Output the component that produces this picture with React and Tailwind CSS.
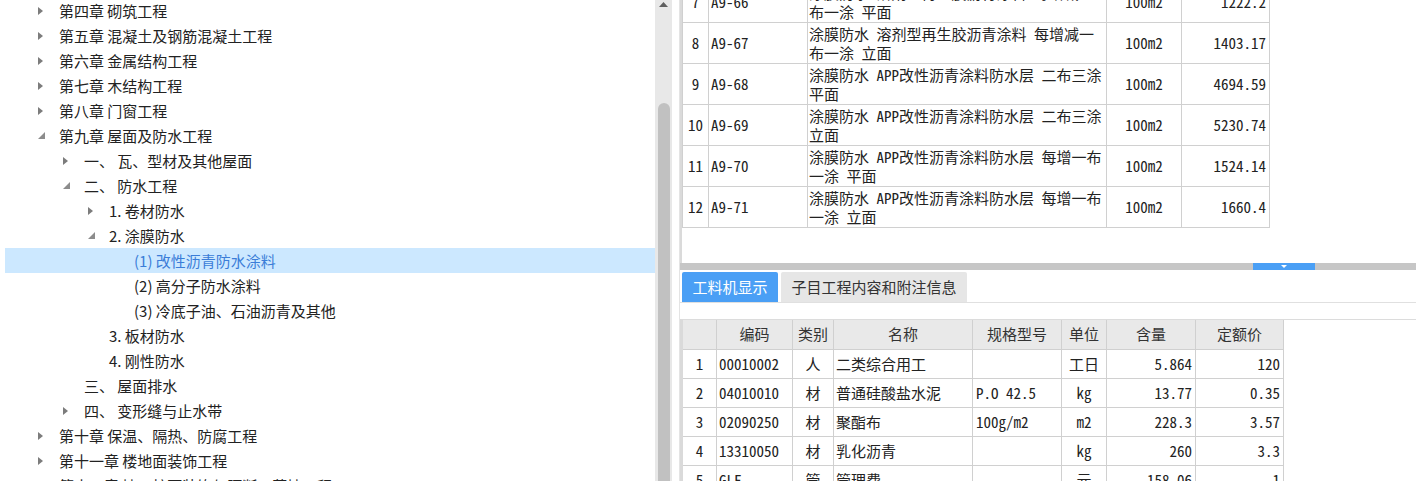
import React from "react";

const treeRows = [
  { level: 0, arrow: "closed", text: "第四章 砌筑工程" },
  { level: 0, arrow: "closed", text: "第五章 混凝土及钢筋混凝土工程" },
  { level: 0, arrow: "closed", text: "第六章 金属结构工程" },
  { level: 0, arrow: "closed", text: "第七章 木结构工程" },
  { level: 0, arrow: "closed", text: "第八章 门窗工程" },
  { level: 0, arrow: "open", text: "第九章 屋面及防水工程" },
  { level: 1, arrow: "closed", text: "一、 瓦、型材及其他屋面" },
  { level: 1, arrow: "open", text: "二、 防水工程" },
  { level: 2, arrow: "closed", text: "1. 卷材防水" },
  { level: 2, arrow: "open", text: "2. 涂膜防水" },
  { level: 3, arrow: null, text: "(1) 改性沥青防水涂料", selected: true },
  { level: 3, arrow: null, text: "(2) 高分子防水涂料" },
  { level: 3, arrow: null, text: "(3) 冷底子油、石油沥青及其他" },
  { level: 2, arrow: null, text: "3. 板材防水" },
  { level: 2, arrow: null, text: "4. 刚性防水" },
  { level: 1, arrow: null, text: "三、 屋面排水" },
  { level: 1, arrow: "closed", text: "四、 变形缝与止水带" },
  { level: 0, arrow: "closed", text: "第十章 保温、隔热、防腐工程" },
  { level: 0, arrow: "closed", text: "第十一章 楼地面装饰工程" },
  { level: 0, arrow: "closed", text: "第十二章 墙、柱面装饰与隔断、幕墙工程" },
];

const indent = ["pl-[33px]", "pl-[58px]", "pl-[83px]", "pl-[108px]"];

const quotaRows = [
  { no: 7, code: "A9-66", l1: "涂膜防水 溶剂型再生胶沥青涂料 每增减一", l2: "布一涂 平面", unit: "100m2", price: "1222.2" },
  { no: 8, code: "A9-67", l1: "涂膜防水 溶剂型再生胶沥青涂料 每增减一", l2: "布一涂 立面", unit: "100m2", price: "1403.17" },
  { no: 9, code: "A9-68", l1: "涂膜防水 APP改性沥青涂料防水层 二布三涂", l2: "平面", unit: "100m2", price: "4694.59" },
  { no: 10, code: "A9-69", l1: "涂膜防水 APP改性沥青涂料防水层 二布三涂", l2: "立面", unit: "100m2", price: "5230.74" },
  { no: 11, code: "A9-70", l1: "涂膜防水 APP改性沥青涂料防水层 每增一布", l2: "一涂 平面", unit: "100m2", price: "1524.14" },
  { no: 12, code: "A9-71", l1: "涂膜防水 APP改性沥青涂料防水层 每增一布", l2: "一涂 立面", unit: "100m2", price: "1660.4" },
];

const materials = [
  { no: 1, code: "00010002", kind: "人", name: "二类综合用工", spec: "", unit: "工日", qty: "5.864", price: "120" },
  { no: 2, code: "04010010", kind: "材", name: "普通硅酸盐水泥", spec: "P.O 42.5", unit: "kg", qty: "13.77", price: "0.35" },
  { no: 3, code: "02090250", kind: "材", name: "聚酯布", spec: "100g/m2", unit: "m2", qty: "228.3", price: "3.57" },
  { no: 4, code: "13310050", kind: "材", name: "乳化沥青", spec: "", unit: "kg", qty: "260", price: "3.3" },
  { no: 5, code: "GLF", kind: "管", name: "管理费", spec: "", unit: "元", qty: "158.06", price: "1" },
];

const cell = "border-r border-b border-[#d0d0d0] flex items-center";
const mono = "font-['Noto_Sans_Mono_CJK_SC','Noto_Sans_CJK_SC',sans-serif]";

function Arrow({ kind }) {
  if (kind === "closed") {
    return (
      <svg width="6" height="8" viewBox="0 0 6 8">
        <polygon points="0,0 5,4 0,8" fill="#7c7c7c" />
      </svg>
    );
  }
  if (kind === "open") {
    return (
      <svg width="7" height="7" viewBox="0 0 7 7">
        <polygon points="7,0 7,7 0,7" fill="#8c8c8c" />
      </svg>
    );
  }
  return null;
}

export default function App() {
  return (
    <div className="w-[1416px] h-[481px] overflow-hidden bg-white flex text-[15px] text-[#222] font-['Noto_Sans_CJK_SC',sans-serif]">
      {/* tree */}
      <div className="w-[655px] h-full overflow-hidden">
        <div className="-mt-[2px]">
          {treeRows.map((r, i) => (
            <div
              key={i}
              className={`ml-[5px] h-[25px] flex items-center ${indent[r.level]} ${
                r.selected ? "bg-[#cce8ff] text-[#3b7dd8]" : ""
              }`}
            >
              <div className="w-[21px] flex items-center">
                <Arrow kind={r.arrow} />
              </div>
              <span className="whitespace-pre leading-[25px]">{r.text}</span>
            </div>
          ))}
        </div>
      </div>

      {/* scrollbar */}
      <div className="w-[17px] h-full bg-[#e8e8e8] flex flex-col items-center">
        <svg width="9" height="5" viewBox="0 0 9 5" className="mt-[2px]">
          <polygon points="0,5 4.5,0 9,5" fill="#5f5f5f" />
        </svg>
        <div className="mt-[96px] w-[12px] flex-1 bg-[#c1c1c1] rounded-t-[6px]" />
      </div>
      <div className="w-[8px] h-full border-r border-[#e4e4e4]" />

      {/* right panel */}
      <div className="flex-1 h-full flex flex-col">
        <div className="h-[263px] overflow-hidden border-l-2 border-[#dadada]">
          <div className={`-mt-[18px] w-[587px] grid grid-cols-[26px_99px_299px_75px_88px] border-l border-[#d0d0d0] ${mono}`}>
            {quotaRows.map((r) => (
              <React.Fragment key={r.no}>
                <div className={`${cell} h-[41px] justify-center`}>{r.no}</div>
                <div className={`${cell} h-[41px] pl-[2px]`}>{r.code}</div>
                <div className={`${cell} h-[41px] pl-[1px] flex-col !items-start justify-center leading-[19px] whitespace-pre`}>
                  <span>{r.l1}</span>
                  <span>{r.l2}</span>
                </div>
                <div className={`${cell} h-[41px] justify-center`}>{r.unit}</div>
                <div className={`${cell} h-[41px] justify-end pr-[3px]`}>{r.price}</div>
              </React.Fragment>
            ))}
          </div>
        </div>

        {/* splitter */}
        <div className="h-[7px] bg-[#c6c6c6] flex">
          <div className="ml-[573px] w-[62px] bg-[#4a9ff5] flex justify-center">
            <svg width="6" height="4" viewBox="0 0 6 4" className="mt-[2px]">
              <polygon points="0,0 6,0 3,3" fill="#ffffff" />
            </svg>
          </div>
        </div>

        {/* tabs */}
        <div className="pt-[2px] flex gap-[3px] pl-[2px] border-b border-[#e0e0e0]">
          <div className="h-[30px] w-[96px] bg-[#4a9ff5] text-white rounded-t-[2px] flex items-center justify-center">
            工料机显示
          </div>
          <div className="h-[30px] w-[186px] bg-[#e6e6e6] text-[#333] rounded-t-[2px] flex items-center justify-center">
            子目工程内容和附注信息
          </div>
        </div>
        <div className="h-[16px]" />

        {/* materials table */}
        <div className="flex-1 border-t border-[#dcdcdc] border-l-[3px] border-l-[#dadada] overflow-hidden">
          <div className="w-[601px] grid grid-cols-[34px_76px_41px_139px_89px_45px_89px_88px]">
            {["", "编码", "类别", "名称", "规格型号", "单位", "含量", "定额价"].map((h, i) => (
              <div key={i} className={`${cell} h-[30px] justify-center bg-[#e9e9e9] text-[#333]`}>
                {h}
              </div>
            ))}
            {materials.map((m) => (
              <React.Fragment key={m.no}>
                <div className={`${cell} h-[29px] justify-center ${mono}`}>{m.no}</div>
                <div className={`${cell} h-[29px] pl-[2px] ${mono}`}>{m.code}</div>
                <div className={`${cell} h-[29px] justify-center`}>{m.kind}</div>
                <div className={`${cell} h-[29px] pl-[2px]`}>{m.name}</div>
                <div className={`${cell} h-[29px] pl-[3px] whitespace-pre ${mono}`}>{m.spec}</div>
                <div className={`${cell} h-[29px] justify-center ${mono}`}>{m.unit}</div>
                <div className={`${cell} h-[29px] justify-end pr-[3px] ${mono}`}>{m.qty}</div>
                <div className={`${cell} h-[29px] justify-end pr-[3px] ${mono}`}>{m.price}</div>
              </React.Fragment>
            ))}
          </div>
        </div>
      </div>
    </div>
  );
}
